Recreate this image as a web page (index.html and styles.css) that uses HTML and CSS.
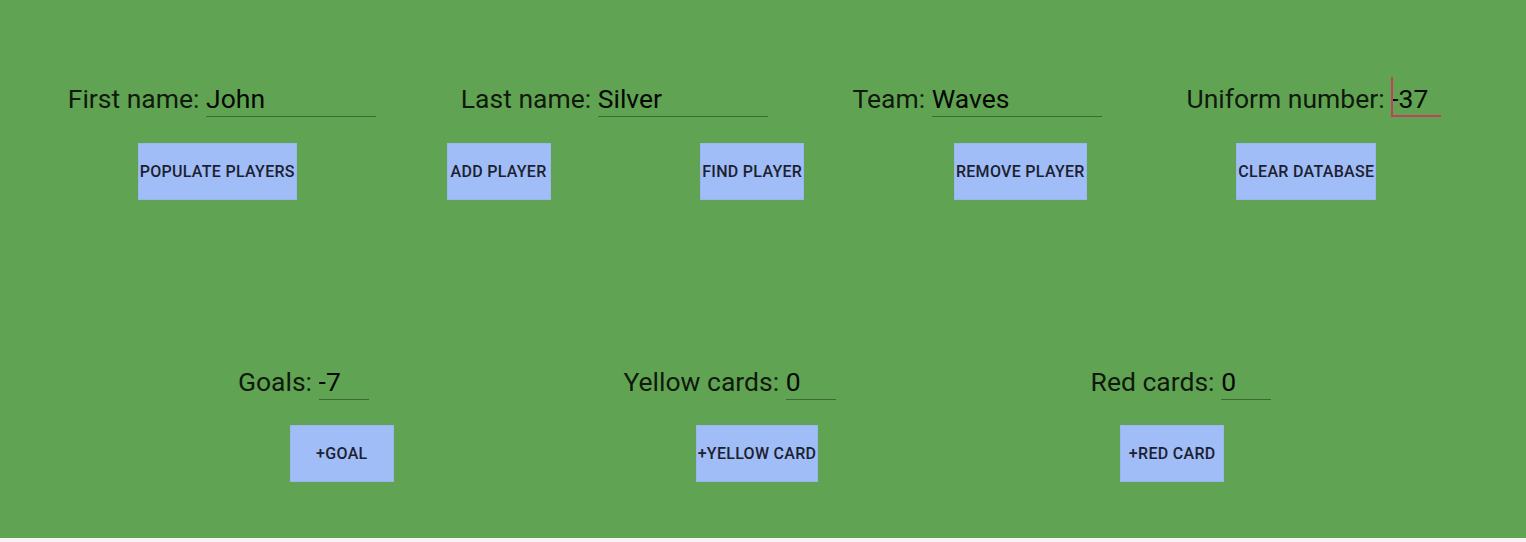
FILE: index.html
```html
<!DOCTYPE html>
<html lang="en">
<head>
  <meta charset="UTF-8">
  <title>Player Database</title>
  <link rel="stylesheet" href="styles.css">
</head>
<body>
  <div class="screen">
    <div class="field-row top-fields">
      <label class="field">First name: <input type="text" class="wide" value="John"></label>
      <label class="field">Last name: <input type="text" class="wide" value="Silver"></label>
      <label class="field">Team: <input type="text" class="wide" value="Waves"></label>
      <label class="field">Uniform number: <span class="caret-wrap"><input type="text" class="narrow focused" value="-37"></span></label>
    </div>
    <div class="button-row">
      <button>Populate players</button>
      <button>Add player</button>
      <button>Find player</button>
      <button>Remove player</button>
      <button>Clear database</button>
    </div>

    <div class="field-row stat-fields">
      <label class="field">Goals: <input type="text" class="narrow" value="-7"></label>
      <label class="field">Yellow cards: <input type="text" class="narrow" value="0"></label>
      <label class="field">Red cards: <input type="text" class="narrow" value="0"></label>
    </div>
    <div class="button-row">
      <button>+Goal</button>
      <button>+Yellow card</button>
      <button>+Red card</button>
    </div>
  </div>
</body>
</html>
```

FILE: styles.css
```css
* {
  box-sizing: border-box;
  margin: 0;
  padding: 0;
  font-family: Roboto, 'Noto Sans', sans-serif;
}

body {
  background: #f4f6f4;
}

.screen {
  background: #60a352;
  height: 538px;
  overflow: hidden;
}

.field-row {
  display: flex;
  justify-content: space-evenly;
  align-items: baseline;
}

.top-fields {
  margin-top: 83px;
}

.stat-fields {
  margin-top: 166px;
}

.field {
  margin-right: 17px;
  font-size: 26.5px;
  color: rgba(0, 0, 0, 0.86);
  white-space: nowrap;
}

.field input {
  font-size: 26.5px;
  line-height: 31px;
  height: 34px;
  padding: 0 0 2px;
  color: #050805;
  background: transparent;
  border: none;
  border-bottom: 1px solid #3b6a33;
  outline: none;
}

.field input.wide {
  width: 170px;
}

.field input.narrow {
  width: 50px;
}

.caret-wrap {
  position: relative;
}

.caret-wrap::before {
  content: "";
  position: absolute;
  left: 0;
  bottom: -1px;
  width: 2px;
  height: 38px;
  background: #c2405e;
}

.field input.focused {
  border-bottom: 2px solid #c2405e;
  padding-bottom: 1px;
}

.button-row {
  display: flex;
  justify-content: space-evenly;
  margin-top: 26px;
}

.stat-fields + .button-row {
  margin-top: 25px;
}

.button-row button {
  margin-right: 12px;
  min-width: 104px;
  height: 57px;
  padding: 0 1px;
  background: #a0bdf8;
  border: 1px solid #98b6ef;
  color: #1c2130;
  font-size: 16px;
  font-weight: 500;
  letter-spacing: 0.3px;
  text-transform: uppercase;
}
```
